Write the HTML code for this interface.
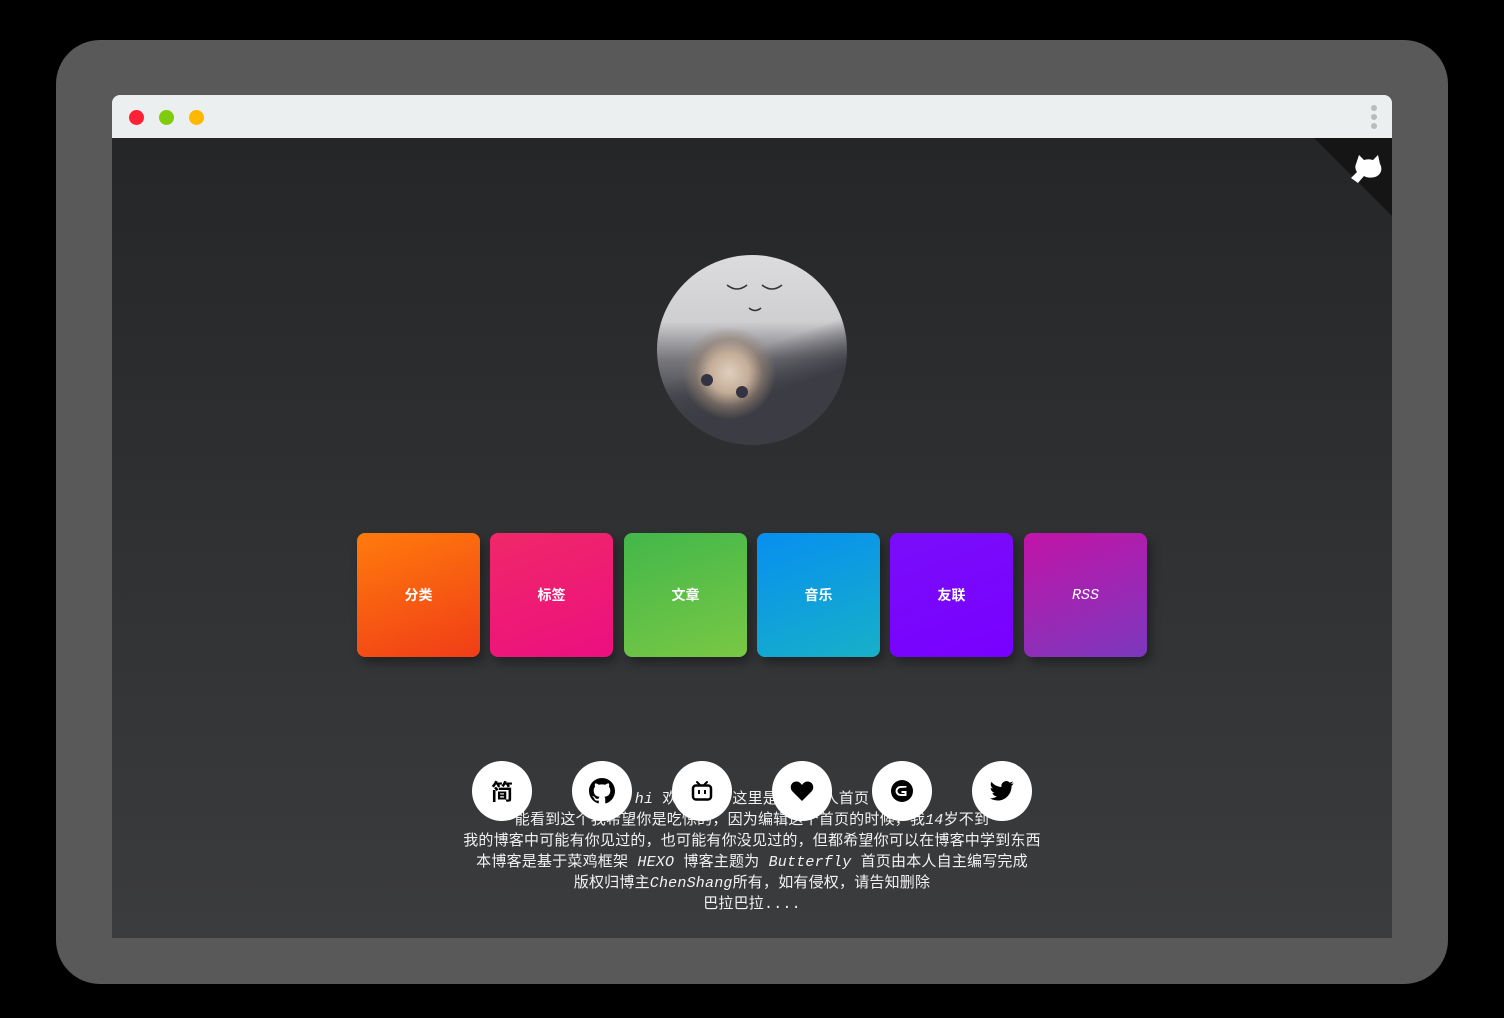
<!DOCTYPE html>
<html><head><meta charset="utf-8"><style>
*{margin:0;padding:0;box-sizing:border-box}
body{width:1504px;height:1018px;background:#000;position:relative;overflow:hidden;font-family:"Liberation Mono","Noto Sans CJK SC",monospace}
.frame{position:absolute;left:56px;top:40px;width:1392px;height:944px;background:#595959;border-radius:44px}
.win{position:absolute;left:112px;top:95px;width:1280px;height:843px;border-radius:8px 8px 0 0;overflow:hidden}
.bar{height:43px;background:#eceff0;position:relative}
.dot{position:absolute;top:15px;width:15px;height:15px;border-radius:50%}
.content{position:absolute;top:43px;left:0;width:1280px;height:800px;background:linear-gradient(#242628,#3b3c3e)}
.tile{position:absolute;top:395px;width:123px;height:124px;border-radius:8px;color:#fff;font-size:14px;font-weight:bold;display:flex;align-items:center;justify-content:center;box-shadow:4px 6px 10px rgba(0,0,0,.35);font-family:"Liberation Sans","Noto Sans CJK SC",sans-serif}
.ic{position:absolute;top:623px;width:60px;height:60px;border-radius:50%;background:#fff;display:flex;align-items:center;justify-content:center;z-index:2}
.txt{position:absolute;top:651px;left:0;width:1280px;text-align:center;color:#f2f2f2;font-size:15px;line-height:21px;letter-spacing:0.2px}
.txt i{font-style:italic}
</style></head><body>
<div class="frame"></div>
<div class="win">
 <div class="bar">
  <div class="dot" style="left:17px;background:#ff2136"></div>
  <div class="dot" style="left:47px;background:#7fcc0c"></div>
  <div class="dot" style="left:77px;background:#ffb700"></div>
  <div style="position:absolute;right:15px;top:10px;width:6px">
   <div style="width:6px;height:6px;border-radius:50%;background:#b9bcbd;margin-bottom:3px"></div>
   <div style="width:6px;height:6px;border-radius:50%;background:#b9bcbd;margin-bottom:3px"></div>
   <div style="width:6px;height:6px;border-radius:50%;background:#b9bcbd"></div>
  </div>
 </div>
 <div class="content">
  <svg style="position:absolute;right:0;top:0" width="78" height="78" viewBox="0 0 78 78"><polygon points="0,0 78,0 78,78" fill="#151515"/>
   <path d="M42 26 l3-9 5 5 c3-1 6-1 9 0 l5-5 2 9 c3 5 1 11-5 13 c-4 1-8 1-11-1 l-6 7 -7-5 6-6 c-2-3-2-6-1-8z" fill="#fff"/></svg>
  <div style="position:absolute;left:545px;top:117px;width:190px;height:190px;border-radius:50%;overflow:hidden;background:radial-gradient(ellipse at 38% 62%,#e0cfbd 0,#c4ad98 12%,rgba(150,130,115,.6) 20%,transparent 28%),linear-gradient(160deg,transparent 50%,#3c3d44 70%),linear-gradient(#dcdcde 0%,#cfcfd2 35%,#77777c 55%,#4a4b51 75%,#3a3b41 100%)">
   <svg width="190" height="190" style="position:absolute;left:0;top:0"><path d="M70 30 q10 8 20 0 M105 30 q10 8 20 0 M92 53 q6 5 12 0" stroke="#333" stroke-width="1.5" fill="none"/><circle cx="50" cy="125" r="6" fill="#334"/><circle cx="85" cy="137" r="6" fill="#334"/></svg>
  </div>
  <div class="tile" style="left:245px;background:linear-gradient(160deg,#ff7b0c,#f03d17)">分类</div>
  <div class="tile" style="left:378px;background:linear-gradient(160deg,#f02868,#ec0f80)">标签</div>
  <div class="tile" style="left:512px;background:linear-gradient(160deg,#42b74a,#79c844)">文章</div>
  <div class="tile" style="left:645px;background:linear-gradient(160deg,#078ff0,#17b0c8)">音乐</div>
  <div class="tile" style="left:778px;background:linear-gradient(160deg,#7b0dfa,#7700ff)">友联</div>
  <div class="tile" style="left:912px;background:linear-gradient(160deg,#c214a8,#7b38bd)"><i style="font-weight:normal;font-size:15px;font-family:'Liberation Mono',monospace">RSS</i></div>

  <div class="ic" style="left:360px;font-size:22px;font-family:'Noto Sans CJK SC',sans-serif;font-weight:bold;color:#000">简</div>
  <div class="ic" style="left:460px"><svg width="26" height="26" viewBox="0 0 16 16"><path d="M8 0C3.58 0 0 3.58 0 8c0 3.540 2.290 6.530 5.470 7.590.4.07.55-.17.55-.38v-1.330c-2.230.48-2.700-1.070-2.700-1.070-.36-.92-.89-1.170-.89-1.170-.73-.5.05-.49.05-.49.8.06 1.230.83 1.230.83.71 1.220 1.870.87 2.330.66.07-.52.28-.87.5-1.070-1.780-.2-3.640-.89-3.640-3.950 0-.87.31-1.590.82-2.150-.08-.2-.36-1.020.08-2.120 0 0 .67-.21 2.200.82a7.600 7.600 0 014 0c1.530-1.040 2.200-.82 2.200-.82.44 1.100.16 1.920.08 2.120.51.56.82 1.270.82 2.150 0 3.070-1.870 3.750-3.650 3.950.29.25.54.73.54 1.480v2.200c0 .21.15.46.55.38A8 8 0 0016 8c0-4.420-3.580-8-8-8z" fill="#000"/></svg></div>
  <div class="ic" style="left:560px"><svg width="22" height="22" viewBox="0 0 22 22"><path d="M6 2l3 3M16 2l-3 3" stroke="#000" stroke-width="2" stroke-linecap="round"/><rect x="2" y="5.5" width="18" height="14" rx="3" fill="none" stroke="#000" stroke-width="2.5"/><rect x="7" y="10" width="2" height="4" fill="#000"/><rect x="13" y="10" width="2" height="4" fill="#000"/></svg></div>
  <div class="ic" style="left:660px"><svg width="24" height="22" viewBox="0 0 24 22"><path d="M12 21L2.5 11.5C-1 8 1 1.5 6.5 1.5c2.5 0 4 1.5 5.5 3.5 1.5-2 3-3.5 5.5-3.5 5.5 0 7.5 6.5 4 10z" fill="#000"/></svg></div>
  <div class="ic" style="left:760px"><svg width="24" height="24" viewBox="0 0 24 24"><circle cx="12" cy="12" r="11" fill="#000"/><path d="M16.5 8.5V7h-6a4.5 4.5 0 000 10h6v-5h-5v2h3v1h-4a2.5 2.5 0 010-6z" fill="#fff"/></svg></div>
  <div class="ic" style="left:860px"><svg width="24" height="20" viewBox="0 0 24 20"><path d="M23.6 2.3c-.9.4-1.8.6-2.8.8 1-.6 1.8-1.6 2.1-2.7-1 .6-2 1-3.1 1.2A4.9 4.9 0 0011.5 6C7.4 5.8 3.8 3.8 1.4.9c-1.3 2.3-.6 5.1 1.5 6.6-.8 0-1.6-.3-2.2-.6 0 2.4 1.7 4.4 3.9 4.9-.7.2-1.5.2-2.2.1.6 2 2.4 3.4 4.6 3.4A9.9 9.9 0 010 17.3 14 14 0 007.5 19.5c9.1 0 14.3-7.7 14-14.6 1-.7 1.8-1.6 2.1-2.6z" fill="#000"/></svg></div>

  <div class="txt"><i>hi</i> 欢迎来到 这里是我的个人首页<br>能看到这个我希望你是吃惊的，因为编辑这个首页的时候，我<i>14</i>岁不到<br>我的博客中可能有你见过的，也可能有你没见过的，但都希望你可以在博客中学到东西<br>本博客是基于菜鸡框架 <i>HEXO</i> 博客主题为 <i>Butterfly</i> 首页由本人自主编写完成<br>版权归博主<i>ChenShang</i>所有，如有侵权，请告知删除<br>巴拉巴拉....</div>
 </div>
</div>
</body></html>
